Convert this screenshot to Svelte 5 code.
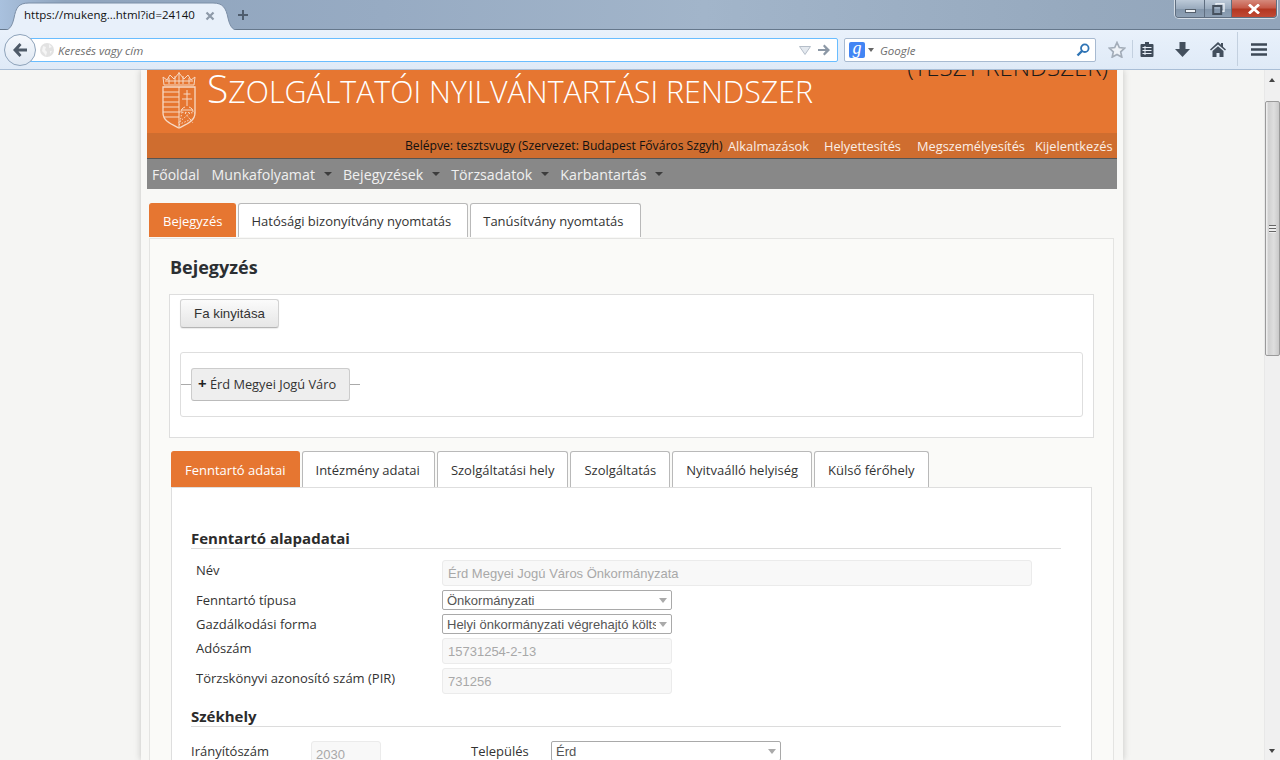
<script>
  const topTabs = ['Hatósági bizonyítvány nyomtatás', 'Tanúsítvány nyomtatás'];
  const subTabs = ['Intézmény adatai', 'Szolgáltatási hely', 'Szolgáltatás', 'Nyitvaálló helyiség', 'Külső férőhely'];
  const navItems = ['Munkafolyamat', 'Bejegyzések', 'Törzsadatok', 'Karbantartás'];
</script>

<div class="root">
  <header class="browser">
    <div class="tabstrip">
      <div class="tab">
        <svg class="tabshape" width="240" height="30" viewBox="0 0 240 30"><path d="M0 30C8 30 11 26 13 17 15 7 17 2 28 2H212C222 2 225 7 227 17 229 26 232 30 240 30Z" fill="#e8f0fa" stroke="#7b8ea6" stroke-width="1"/></svg>
        <span class="tabtitle">https://mukeng...html?id=24140</span>
        <svg class="tabclose" width="10" height="10" viewBox="0 0 10 10"><path d="M1.5 1.5l7 7M8.5 1.5l-7 7" stroke="#8d99a8" stroke-width="2.2"/></svg>
      </div>
      <svg class="newtab" width="12" height="12" viewBox="0 0 12 12"><path d="M6 1v10M1 6h10" stroke="#4f5d6e" stroke-width="2"/></svg>
      <div class="winctl">
        <div class="wbtn wmin"><span></span></div>
        <div class="wbtn wres"><svg width="13" height="12" viewBox="0 0 13 12"><path d="M4 2.5V.8h8v7.5h-2" fill="none" stroke="#e9eef4" stroke-width="1.4"/><rect x="1.2" y="3" width="8" height="8" fill="none" stroke="#46515e" stroke-width="2"/></svg></div>
        <div class="wbtn wclose"><svg width="14" height="10" viewBox="0 0 14 10"><path d="M2 .5l10 9M12 .5l-10 9" stroke="#fff" stroke-width="2.8"/></svg></div>
      </div>
    </div>
    <div class="toolbar">
      <div class="back"><svg width="16" height="14" viewBox="0 0 16 14"><path d="M7.5 0L1 7l6.500 7 2-2L6.500 8.500H15v-3H6.500L9.500 2z" fill="#4e5a68"/></svg></div>
      <div class="urlbar">
        <svg class="globe" width="14" height="14" viewBox="0 0 14 14"><circle cx="7" cy="7" r="7" fill="#e2e2e2"/><path d="M3 3l3 1-1 3 2 2-1 4-2-3-2-2zM9 1l3 3-3 1zM10 8l2 0-2 3z" fill="#f5f5f5"/></svg>
        <span class="ph url">Keresés vagy cím</span>
        <svg class="tri" width="12" height="9" viewBox="0 0 12 9"><path d="M.5.5h11L6 8.500z" fill="#e4e9ef" stroke="#b5bec9"/></svg>
        <svg class="go" width="14" height="12" viewBox="0 0 14 12"><path d="M7.500.5L13 6l-5.500 5.500-1.500-1.500L8.500 7H1V5h7.500L6 2z" fill="#8c98a6"/></svg>
      </div>
      <div class="searchbar">
        <div class="gicon">g</div>
        <span class="gcaret"></span>
        <span class="ph">Google</span>
        <svg class="mag" width="14" height="14" viewBox="0 0 14 14"><circle cx="8.800" cy="5.200" r="3.800" fill="none" stroke="#2f74b5" stroke-width="1.800"/><path d="M6 8L1.500 12.500" stroke="#2f74b5" stroke-width="2.400"/></svg>
      </div>
      <div class="tools">
        <svg class="star" width="18" height="17" viewBox="0 0 18 17"><path d="M9 1.500l2.300 5 5.400.6-4 3.700 1.100 5.300L9 13.400l-4.800 2.700 1.100-5.300-4-3.700 5.400-.6z" fill="#eef2f7" stroke="#a3adb9" stroke-width="1.700"/></svg>
        <i class="sep s1"></i>
        <svg class="clip" width="14" height="15" viewBox="0 0 14 15"><path d="M5 0h4v2h3.500a1 1 0 0 1 1 1v11a1 1 0 0 1-1 1h-11a1 1 0 0 1-1-1V3a1 1 0 0 1 1-1H5z" fill="#3f4b59"/><path d="M2.500 5.500h9M2.500 8.500h9M2.500 11.500h9M5 4v9" stroke="#e8eff8" stroke-width="1"/></svg>
        <svg class="down" width="15" height="15" viewBox="0 0 15 15"><path d="M4.500 0h6v7H15l-7.500 8L0 7h4.500z" fill="#434f5d"/></svg>
        <svg class="home" width="16" height="15" viewBox="0 0 16 15"><path d="M8 0L0 7.500l1 1L8 2.500l7 6 1-1-3-2.800V1h-2v1.800z" fill="#434f5d"/><path d="M2.500 9L8 4.300 13.500 9v6H9.500v-4h-3v4h-4z" fill="#434f5d"/></svg>
        <i class="sep s2"></i>
        <svg class="menu" width="16" height="13" viewBox="0 0 16 13"><path d="M0 1.500h16M0 6.500h16M0 11.500h16" stroke="#3d4856" stroke-width="2.400"/></svg>
      </div>
    </div>
  </header>

  <div class="viewport">
    <main class="page">
      <div class="sheet">
        <section class="brand">
          <svg class="arms" width="36" height="60" viewBox="0 0 36 60" fill="none" stroke="#f7d9c4" stroke-width="1">
            <path d="M3 16l-1-8 4 3 3-5 4 4 5-6 5 6 4-4 3 5 4-3-1 8z" />
            <path d="M4 12h28M8 9v6M14 7v8M22 7v8M28 9v6M18 3v12"/>
            <path d="M2 18h32v26c0 8-8 11-16 15C10 55 2 52 2 44z" stroke-width="1.300"/>
            <path d="M18 18v40"/>
            <path d="M2 23h16M2 28h16M2 33h16M2 38h16M2 43h16M3 48h15"/>
            <path d="M26 21v16M22.500 25h7M21 30h10M24 38c-3 1-4 3-4 5M28 38c3 1 4 3 4 5M20 41h12"/>
            <path d="M18 43l16 1M21 43l-3 15M24 44l8 10M29 44l-12 10M33 49l-14 6" stroke-dasharray="1.500 1.500"/>
          </svg>
          <h1>Szolgáltatói nyilvántartási rendszer</h1>
          <span class="test">(TESZT RENDSZER)</span>
        </section>
        <section class="userbar">
          <span class="who">Belépve: tesztsvugy (Szervezet: Budapest Főváros Szgyh)</span>
          <a class="u1">Alkalmazások</a>
          <a class="u2">Helyettesítés</a>
          <a class="u3">Megszemélyesítés</a>
          <a class="u4">Kijelentkezés</a>
        </section>
        <nav class="mainnav">
          <a class="home-link">Főoldal</a>
          {#each navItems as item}
            <a>{item}<i class="caret"></i></a>
          {/each}
        </nav>

        <div class="tabs top">
          <span class="t active">Bejegyzés</span>
          {#each topTabs as t}<span class="t">{t}</span>{/each}
        </div>
        <div class="panel">
          <h2>Bejegyzés</h2>
          <div class="treebox">
            <button class="btn">Fa kinyitása</button>
            <div class="tree">
              <i class="line l"></i>
              <div class="node"><b>+</b> Érd Megyei Jogú Váro</div>
              <i class="line r"></i>
            </div>
          </div>

          <div class="tabs sub">
            <span class="t active">Fenntartó adatai</span>
            {#each subTabs as t}<span class="t">{t}</span>{/each}
          </div>
          <div class="subpanel">
            <h3 class="first">Fenntartó alapadatai</h3>
            <div class="row r-input"><label>Név</label><div class="ctl dis wide">Érd Megyei Jogú Város Önkormányzata</div></div>
            <div class="row r-sel"><label>Fenntartó típusa</label><div class="ctl sel"><span>Önkormányzati</span><i></i></div></div>
            <div class="row r-sel"><label>Gazdálkodási forma</label><div class="ctl sel"><span>Helyi önkormányzati végrehajtó költségvetési szerv</span><i></i></div></div>
            <div class="row r-input"><label>Adószám</label><div class="ctl dis">15731254-2-13</div></div>
            <div class="row r-input"><label>Törzskönyvi azonosító szám (PIR)</label><div class="ctl dis">731256</div></div>
            <h3 class="second">Székhely</h3>
            <div class="addr">
              <label class="a1">Irányítószám</label>
              <div class="ctl dis zip">2030</div>
              <label class="a2">Település</label>
              <div class="ctl sel city"><span>Érd</span><i></i></div>
            </div>
          </div>
        </div>
      </div>
    </main>
    <aside class="scrollbar">
      <i class="arrow up"></i>
      <div class="thumb"><span></span></div>
      <i class="arrow dn"></i>
    </aside>
  </div>
</div>

<style>
  :global(body) { margin: 0; background: #f5f5f3; }
  .root { width: 1280px; height: 760px; overflow: hidden; display: flex; flex-direction: column; font-family: "Open Sans", sans-serif; color: #333; }

  /* browser chrome */
  .browser { height: 70px; flex: none; box-sizing: border-box; border-bottom: 1px solid #a9bed6; }
  .tabstrip { height: 30px; position: relative; box-sizing: border-box; display: flex; align-items: center; padding-left: 14px;
    background: linear-gradient(90deg, #a9c1de 0, #8fa4bd 5%, #97abc3 30%, #a2b5ca 55%, #96a9be 85%, #92a5bb 100%); border-bottom: 1px solid #66788c; }
  .tab { width: 214px; height: 28px; position: relative; margin-top: 1px; }
  .tabshape { position: absolute; left: -13px; top: 0; }
  .tabtitle { position: absolute; left: 10px; top: 6px; font-size: 11.500px; line-height: 16px; color: #111; white-space: nowrap; }
  .tabclose { position: absolute; left: 191px; top: 10px; }
  .newtab { margin-left: 9px; margin-top: 1px; }
  .winctl { position: absolute; right: 3px; top: 0; width: 102px; height: 18px; display: flex; border: 1px solid #5f6e80; border-top: 0; border-radius: 0 0 4px 4px; box-sizing: border-box; overflow: hidden; box-shadow: 0 0 0 1px #d5dde6; }
  .wbtn { height: 100%; display: flex; align-items: center; justify-content: center; background: linear-gradient(#bcc9d8, #9aabbe 50%, #8396ab 52%, #8ea0b4); }
  .wmin { width: 28px; border-right: 1px solid #5f6e80; }
  .wmin span { width: 11px; height: 4px; margin-top: 4px; background: #eef2f6; border: 1px solid #55606d; box-sizing: border-box; }
  .wres { width: 26px; border-right: 1px solid #5f6e80; }
  .wclose { flex: 1; background: linear-gradient(#d5897c, #c65b4a 45%, #b33722 55%, #c14a35); }

  .toolbar { height: 39px; position: relative; background: linear-gradient(#e9f1fb, #dfeaf7); }
  .back { position: absolute; left: 4px; top: 4px; width: 32px; height: 32px; box-sizing: border-box; border-radius: 50%; border: 1px solid #8ea3ba; background: linear-gradient(#f6f9fd, #dfe8f3); display: flex; align-items: center; justify-content: center; z-index: 1; }
  .urlbar { position: absolute; left: 28px; top: 8px; width: 810px; height: 24px; box-sizing: border-box; background: #fff; border: 1px solid #69bdff; border-radius: 0 2px 2px 0; display: flex; align-items: center; padding-left: 11px; }
  .globe { flex: none; }
  .ph { font-size: 11.500px; font-style: italic; color: #6d6d6d; font-family: "Open Sans", sans-serif; }
  .url { margin-left: 4px; flex: 1; }
  .tri { margin-right: 6px; }
  .go { margin-right: 6px; }
  .searchbar { position: absolute; left: 844px; top: 8px; width: 252px; height: 24px; box-sizing: border-box; background: #fff; border: 1px solid #a7bad1; border-radius: 2px; display: flex; align-items: center; padding-left: 4px; }
  .gicon { width: 16px; height: 16px; background: #4285f4; color: #fff; border-radius: 2px; font: italic 400 18px/13px "Liberation Serif", serif; text-align: center; }
  .gcaret { width: 0; height: 0; margin: 0 6px 0 3px; border: 3px solid transparent; border-top: 4px solid #666; border-bottom: 0; }
  .mag { margin-left: auto; margin-right: 5px; }
  .tools { position: absolute; left: 0; top: 0; width: 100%; height: 100%; pointer-events: none; }
  .tools > * { position: absolute; }
  .star { left: 1108px; top: 11px; }
  .clip { left: 1140px; top: 12px; }
  .down { left: 1175px; top: 12px; }
  .home { left: 1210px; top: 12px; }
  .menu { left: 1251px; top: 13px; }
  .sep { width: 1px; background: #c3d0df; }
  .s1 { left: 1132px; top: 10px; height: 18px; }
  .s2 { left: 1237px; top: 2px; height: 34px; }

  /* page */
  .viewport { flex: 1; display: flex; min-height: 0; }
  .page { flex: 1; min-width: 0; overflow: hidden; background: #f5f5f3; }
  .sheet { width: 970px; margin: 0 auto; padding: 0 6px; background: #f8f8f6; box-shadow: 2px 0 6px rgba(0,0,0,.1), -2px 0 6px rgba(0,0,0,.1); height: 100%; }
  .sheet > * { width: 970px; box-sizing: border-box; }
  .brand { height: 63px; background: #e67631; position: relative; overflow: hidden; padding-left: 14px; display: flex; }
  .arms { margin-top: -1px; flex: none; }
  h1 { margin: -7px 0 0 10px; font-weight: 300; font-size: 30.350px; line-height: 50px; color: #fff; text-transform: uppercase; white-space: nowrap; height: 50px; }
  h1::first-letter { font-size: 39px; }
  .test { position: absolute; right: 9px; top: -12px; font-weight: 300; font-size: 24px; line-height: 18px; color: #1a1a1a; white-space: nowrap; }
  .userbar { height: 25px; background: #cf6d2f; display: flex; align-items: center; font-size: 12.800px; white-space: nowrap; padding-left: 258px; }
  .who { color: #111; width: 323px; font-size: 12.150px; }
  .userbar a { color: #fbeee6; }
  .u1 { width: 96px; }
  .u2 { width: 93px; }
  .u3 { width: 118px; }
  .mainnav { height: 31px; background: #888; border-top: 1px solid #555; display: flex; align-items: center; padding-left: 5px; font-size: 14.200px; color: #f0f0f0; white-space: nowrap; }
  .home-link { margin-right: 12px; font-size: 14px; }
  .mainnav a:not(.home-link) { margin-right: 10px; display: flex; align-items: center; }
  .caret { width: 0; height: 0; margin-left: 9px; margin-right: 1px; border: 4px solid transparent; border-top: 4px solid #3d3d3d; border-bottom: 0; }

  .tabs { display: flex; gap: 2px; font-size: 13px; }
  .top { padding: 14px 0 0 2px; height: 49px; width: 970px; }
  .t { height: 34px; box-sizing: border-box; padding: 0 16px 0 12px; line-height: 35px; background: #fff; border: 1px solid #b9b9b9; border-bottom: 0; border-radius: 3px 3px 0 0; white-space: nowrap; }
  .t.active { background: #e67631; color: #fff; border-color: #e67631; padding: 0 13px; }
  .panel { margin: 0 0 0 2px; width: 965px !important; border: 1px solid #e4e4e2; background: #fafaf8; padding: 0 19px 40px; height: 600px; }
  h2 { margin: 0; font-size: 18px; line-height: 26px; padding: 15px 0 0 1px; color: #2b2f33; font-weight: 700; height: 55px; box-sizing: border-box; }
  .treebox { width: 925px; height: 144px; box-sizing: border-box; background: #fff; border: 1px solid #dedede; padding: 4px 10px 0; }
  .btn { display: block; width: 99px; height: 29px; font: 13.300px "Liberation Sans", sans-serif; color: #333; background: linear-gradient(#fbfbfb, #e6e6e6); border: 1px solid #d2d2d2; border-bottom-color: #b5b5b5; border-radius: 3px; padding: 0; box-shadow: 0 1px 1px rgba(0,0,0,.08); }
  .tree { margin-top: 24px; height: 65px; box-sizing: border-box; border: 1px solid #dedede; border-radius: 3px; display: flex; align-items: center; }
  .line { width: 10px; height: 1px; background: #aaa; }
  .node { width: 159px; height: 33px; box-sizing: border-box; background: #eee; border: 1px solid #ccc; border-bottom-color: #bbb; border-radius: 3px; font-size: 12.800px; line-height: 31px; padding-left: 6px; white-space: nowrap; margin-top: -1px; }
  .node b { color: #222; font-size: 15px; line-height: 1; }

  .sub { margin: 13px 0 0 2px; height: 36px; align-items: flex-end; }
  .sub .t { height: 36px; line-height: 36px; padding: 0 13px 0 13px; }
  .sub .t:nth-child(2) { padding-right: 14px; }
  .subpanel { margin-left: 2px; width: 921px; height: 300px; box-sizing: border-box; background: #fff; border: 1px solid #dedede; padding: 0 30px 0 19px; }
  h3 { margin: 0; font-size: 15px; font-weight: 700; line-height: 20px; color: #2b2b2b; border-bottom: 1px solid #dcdcdc; }
  .first { padding-top: 40px; height: 20px; line-height: 20px; }
  .second { margin-top: 13px; height: 19px; line-height: 18px; }
  .row { display: flex; padding-left: 5px; font-size: 13px; }
  .row label { width: 246px; flex: none; }
  .r-input { height: 26px; margin-top: 4px; line-height: 20px; }
  .r-sel { height: 20px; margin-top: 4px; line-height: 20px; }
  .row:nth-of-type(1) { margin-top: 11px; }
  .ctl { box-sizing: border-box; width: 230px; font-family: "Liberation Sans", sans-serif; font-size: 13px; border-radius: 2px; white-space: nowrap; }
  .dis { height: 26px; line-height: 26px; background: #f8f8f8; border: 1px solid #ebebeb; padding-left: 5px; color: #a8a8a8; border-radius: 3px; }
  .wide { width: 590px; }
  .sel { height: 20px; line-height: 19px; border: 1px solid #a9a9a9; padding-left: 4px; color: #555; position: relative; overflow: hidden; background: #fff; }
  .sel span { display: block; width: 209px; overflow: hidden; }
  .sel i { position: absolute; right: 4px; top: 7px; width: 0; height: 0; border: 4px solid transparent; border-top: 5px solid #aaa; border-bottom: 0; }
  .addr { display: flex; margin-top: 14px; font-size: 13px; line-height: 20px; }
  .a1 { width: 120px; }
  .zip { width: 70px; height: 26px; padding-left: 4px; }
  .a2 { width: 80px; margin-left: 90px; }
  .city { width: 230px; }

  .scrollbar { width: 16px; flex: none; background: #f0f0f0; position: relative; border-left: 1px solid #e8e8e8; box-sizing: border-box; }
  .thumb { position: absolute; left: 0; top: 31px; width: 15px; height: 255px; box-sizing: border-box; border: 1px solid #9a9a9a; border-radius: 2px; background: linear-gradient(90deg, #f4f4f4, #d0d0d0 20%, #dedede 60%, #c9c9c9); display: flex; align-items: center; justify-content: center; }
  .thumb span { width: 7px; height: 8px; background: repeating-linear-gradient(#666 0 1px, #eee 1px 3px); }
  .arrow { position: absolute; left: 4px; width: 0; height: 0; border: 3.500px solid transparent; }
  .up { top: 8px; border-bottom: 4px solid #444; border-top: 0; }
  .dn { top: 679px; border-top: 4px solid #444; border-bottom: 0; }
</style>
